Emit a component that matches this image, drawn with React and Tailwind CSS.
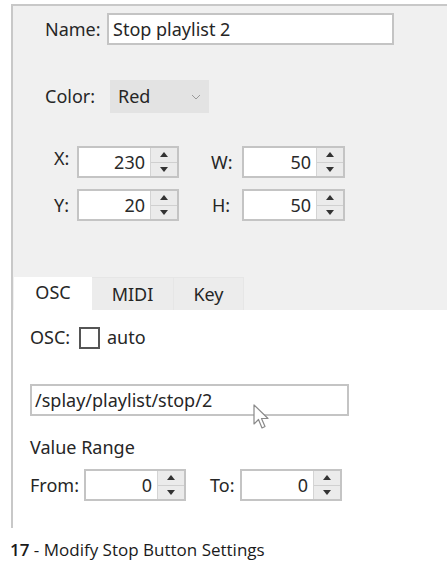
import React from "react";

function Spin({ value, w = "w-[102px]" }) {
  return (
    <div className={`flex h-[32px] ${w} border-2 border-[#c4c4c4] bg-white`}>
      <div className="flex flex-1 items-center justify-end pr-[5px] text-[18px] text-[#2a2a2a]">{value}</div>
      <div className="flex w-[27px] flex-col border-l border-[#d4d4d4] bg-[#ebebeb]">
        <div className="flex flex-1 items-center justify-center border-b border-[#d0d0d0]">
          <svg width="8" height="5" viewBox="0 0 8 5"><path d="M0 5 L4 0 L8 5 Z" fill="#333" /></svg>
        </div>
        <div className="flex flex-1 items-center justify-center">
          <svg width="8" height="5" viewBox="0 0 8 5"><path d="M0 0 L4 5 L8 0 Z" fill="#333" /></svg>
        </div>
      </div>
    </div>
  );
}

export default function App() {
  return (
    <div className="relative h-[564px] w-[447px] overflow-hidden bg-white" style={{ fontFamily: '"Noto Sans", "Open Sans", sans-serif' }}>
      <div className="ml-[11px] mt-[4px] border-l-2 border-t-2 border-[#c8c8c8]">
        {/* top gray area */}
        <div className="h-[271px] bg-[#f0f0f0] text-[18px] text-[#262626]">
          <div className="flex items-center pt-[7px]">
            <span className="ml-[32px] w-[62px]">Name:</span>
            <div className="flex h-[32px] w-[287px] items-center border-2 border-[#c4c4c4] bg-white pl-[4px]">Stop playlist 2</div>
          </div>
          <div className="mt-[35px] flex items-center">
            <span className="ml-[32px] w-[65px]">Color:</span>
            <div className="flex h-[33px] w-[99px] items-center justify-between bg-[#e3e3e3] pl-[8px] pr-[8px]">
              <span>Red</span>
              <svg width="10" height="6" viewBox="0 0 10 6"><path d="M1 1 L5 5 L9 1" fill="none" stroke="#9a9a9a" strokeWidth="1" /></svg>
            </div>
          </div>
          <div className="mt-[33px] flex items-start">
            <span className="ml-[41px] w-[23px] leading-[24px]">X:</span>
            <Spin value="230" />
            <span className="ml-[32px] w-[31px] pt-[4px] leading-[24px]">W:</span>
            <Spin value="50" w="w-[103px]" />
          </div>
          <div className="mt-[11px] flex items-center">
            <span className="ml-[41px] w-[23px]">Y:</span>
            <Spin value="20" />
            <span className="ml-[33px] w-[30px]">H:</span>
            <Spin value="50" w="w-[103px]" />
          </div>
        </div>
        {/* tabs */}
        <div className="flex h-[33px] bg-[#f0f0f0] text-[18px] text-[#262626]">
          <div className="ml-[1px] flex w-[78px] items-center justify-center bg-white pb-[2px]">OSC</div>
          <div className="flex w-[82px] items-center justify-center border-r border-t border-[#e6e6e6] bg-[#ececec]">MIDI</div>
          <div className="flex w-[70px] items-center justify-center border-r border-t border-[#e6e6e6] bg-[#ececec]">Key</div>
        </div>
        {/* white area */}
        <div className="h-[218px] pl-[17px] text-[18px] text-[#262626]">
          <div className="flex items-center pt-[14px]">
            <span className="w-[49px]">OSC:</span>
            <div className="h-[22px] w-[21px] border-2 border-[#555]" />
            <span className="ml-[7px]">auto</span>
          </div>
          <div className="mt-[33px] flex h-[32px] w-[319px] items-center border-2 border-[#c4c4c4] pl-[3px]">/splay/playlist/stop/2</div>
          <div className="mt-[14px] leading-[34px]">Value Range</div>
          <div className="mt-[5px] flex items-center">
            <span className="w-[54px]">From:</span>
            <Spin value="0" />
            <span className="ml-[24px] w-[30px]">To:</span>
            <Spin value="0" />
          </div>
        </div>
      </div>
      <div className="ml-[10px] mt-[9px] text-[17px] text-[#1a1a1a]" style={{ fontFamily: '"Open Sans", sans-serif' }}>
        <span className="font-semibold">17</span> - Modify Stop Button Settings
      </div>
      {/* mouse cursor */}
      <svg className="absolute left-[253px] top-[404px]" width="18" height="27" viewBox="0 0 18 27">
        <path d="M1 1 L1 20 L5.5 15.5 L9 24 L12 22.5 L8.5 14.5 L15 14.5 Z" fill="white" stroke="#8a8a8a" strokeWidth="1.2" strokeLinejoin="round" />
      </svg>
    </div>
  );
}
